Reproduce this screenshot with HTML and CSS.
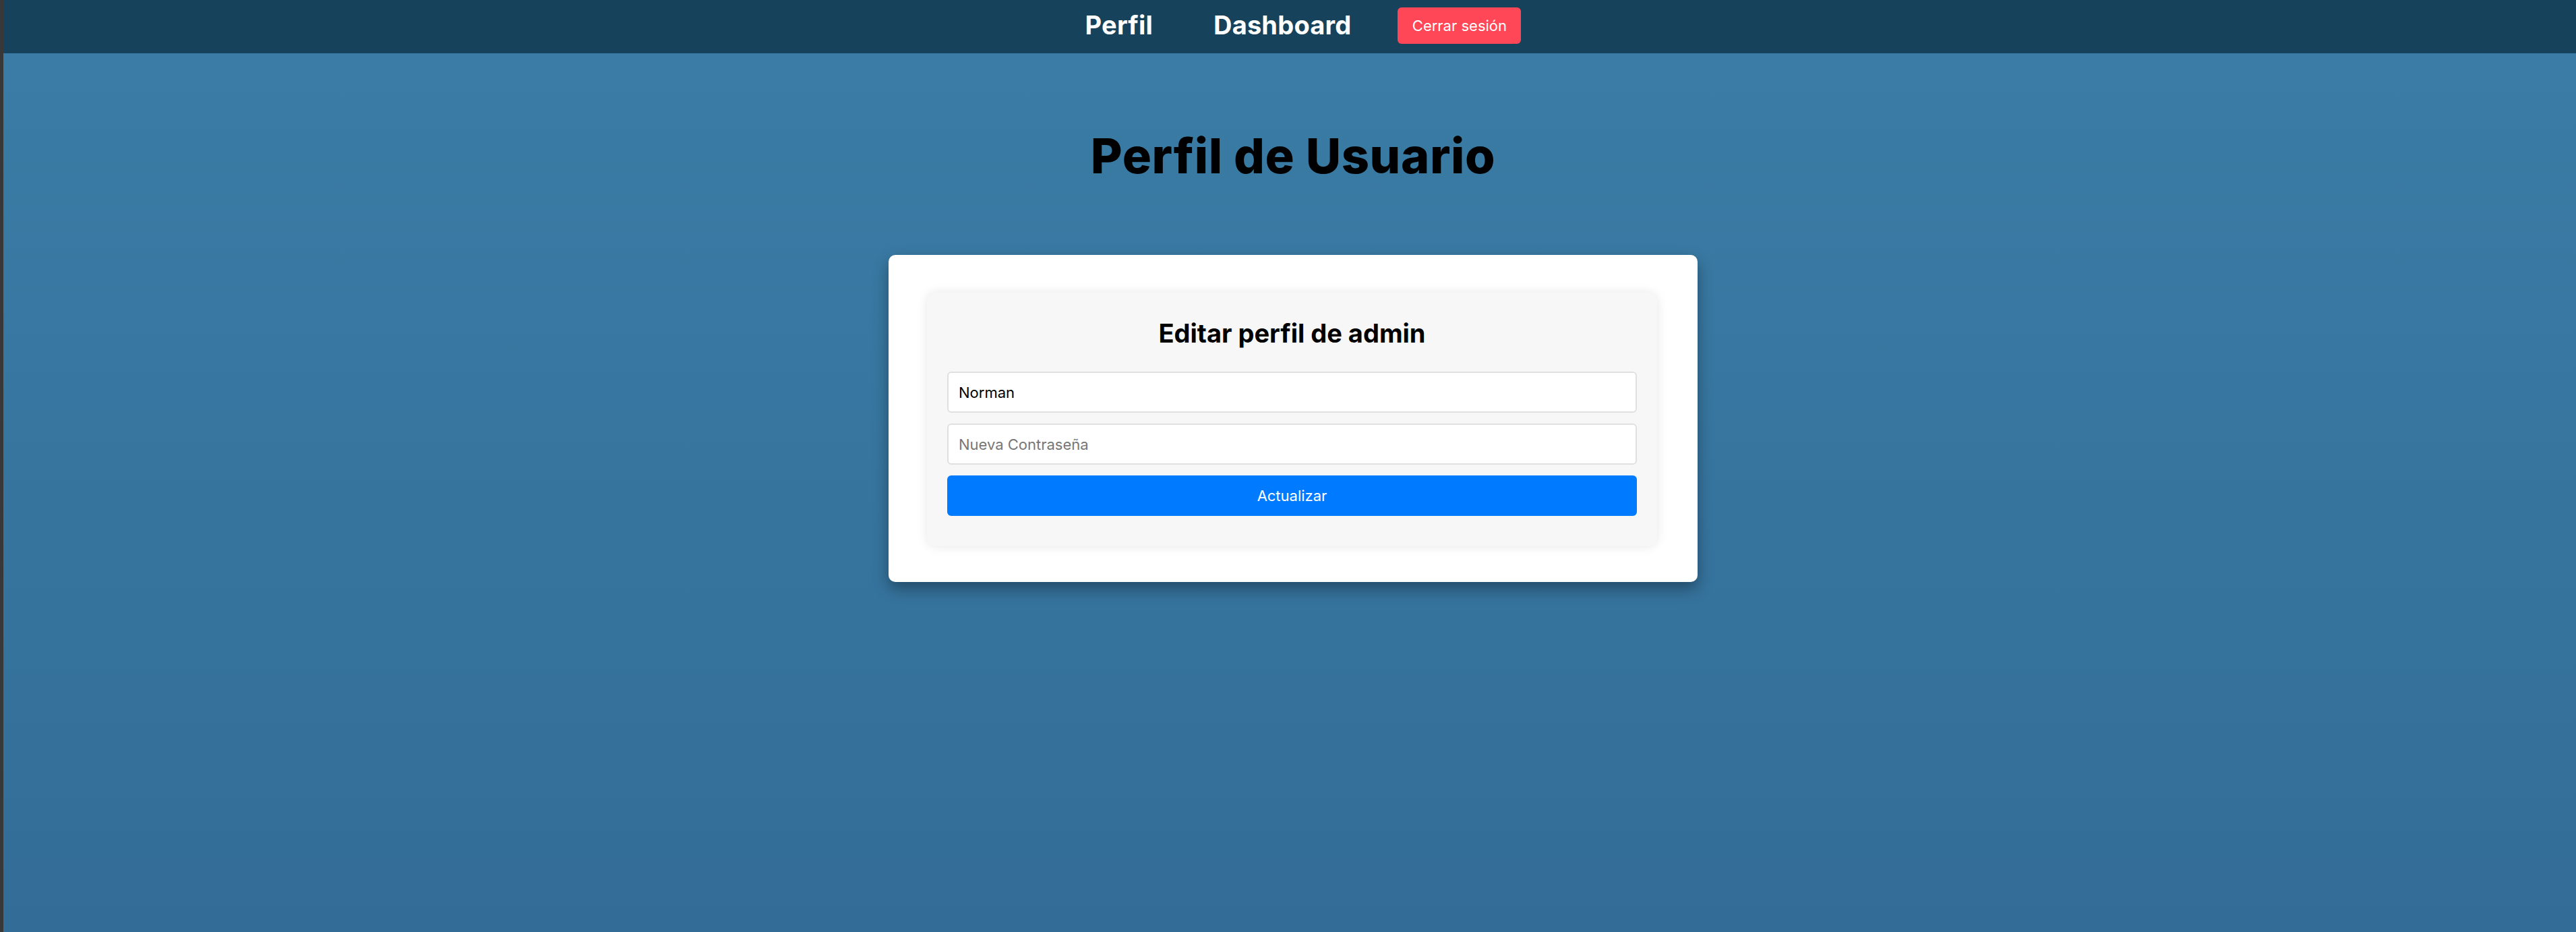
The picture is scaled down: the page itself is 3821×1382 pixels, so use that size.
FILE: index.html
```html
<!DOCTYPE html>
<html lang="es">
<head>
<meta charset="utf-8">
<title>Perfil de Usuario</title>
<link rel="stylesheet" href="styles.css">
</head>
<body>
<nav class="topnav">
  <ul class="nav-list">
    <li class="nav-item nav-item-perfil"><a class="nav-link" href="#">Perfil</a></li>
    <li class="nav-item nav-item-dash"><a class="nav-link" href="#">Dashboard</a></li>
    <li class="nav-item"><button class="logout-btn" type="button">Cerrar sesión</button></li>
  </ul>
</nav>
<main class="page">
  <h1 class="page-title">Perfil de Usuario</h1>
  <section class="card">
    <div class="panel">
      <h2 class="panel-title">Editar perfil de admin</h2>
      <form class="form">
        <input class="field" type="text" value="Norman">
        <input class="field" type="password" placeholder="Nueva Contraseña">
        <button class="submit-btn" type="button">Actualizar</button>
      </form>
    </div>
  </section>
</main>
</body>
</html>
```
FILE: styles.css
```css
* { box-sizing: border-box; }
html, body { height: 100%; }
body {
  margin: 0;
  border-left: 5px solid #383838;
  font-family: Inter, "Open Sans", sans-serif;
  background: #336d97;
  display: flex;
  flex-direction: column;
  overflow: hidden;
}
.topnav {
  height: 79px;
  background: #17425b;
  flex: none;
}
.nav-list {
  list-style: none;
  margin: 0;
  padding: 0 0 0 40px;
  height: 100%;
  display: flex;
  align-items: center;
  justify-content: center;
}
.nav-item-perfil { margin-right: 90px; }
.nav-item-dash { margin-right: 69px; }
.nav-link {
  color: #fff;
  text-decoration: none;
  font-weight: 700;
  font-size: 38px;
  letter-spacing: 0.2px;
  display: block;
  line-height: 1;
  margin-top: -6px;
}
.logout-btn {
  display: block;
  font-family: inherit;
  background: #ff4757;
  color: #fff;
  border: none;
  border-radius: 6px;
  width: 183px;
  height: 54px;
  font-size: 22px;
  margin-top: -4px;
  padding: 0;
}
.page {
  flex: 1;
  background: linear-gradient(#3a7ca5, #336d97);
  padding: 1px 0 0 10px;
  display: flex;
  flex-direction: column;
  align-items: center;
}
.page-title {
  margin: 108px 0 0;
  font-size: 72px;
  line-height: 86px;
  font-weight: 800;
  color: #000;
  letter-spacing: 0.6px;
}
.card {
  margin-top: 104px;
  width: 1200px;
  background: #fff;
  border-radius: 10px;
  padding: 56px 60px 53px 57px;
  box-shadow: 0 10px 22px rgba(0, 0, 0, 0.35);
}
.panel {
  background: #f7f7f7;
  border-radius: 14px;
  padding: 35px 30px 45px;
  box-shadow: 0 0 16px rgba(0, 0, 0, 0.1);
}
.panel-title {
  margin: 0 0 32px;
  text-align: center;
  font-size: 38px;
  line-height: 50px;
  font-weight: 700;
  color: #000;
}
.form {
  display: flex;
  flex-direction: column;
  gap: 16px;
}
.field {
  height: 61px;
  border: 2px solid #e0e0e0;
  border-radius: 6px;
  background: #fff;
  padding: 0 15px;
  font-family: inherit;
  font-size: 22px;
  color: #000;
  outline: none;
}
.field::placeholder { color: #777; }
.submit-btn {
  height: 60px;
  border: none;
  border-radius: 6px;
  background: #007bff;
  color: #fff;
  font-family: inherit;
  font-size: 22px;
}
```
